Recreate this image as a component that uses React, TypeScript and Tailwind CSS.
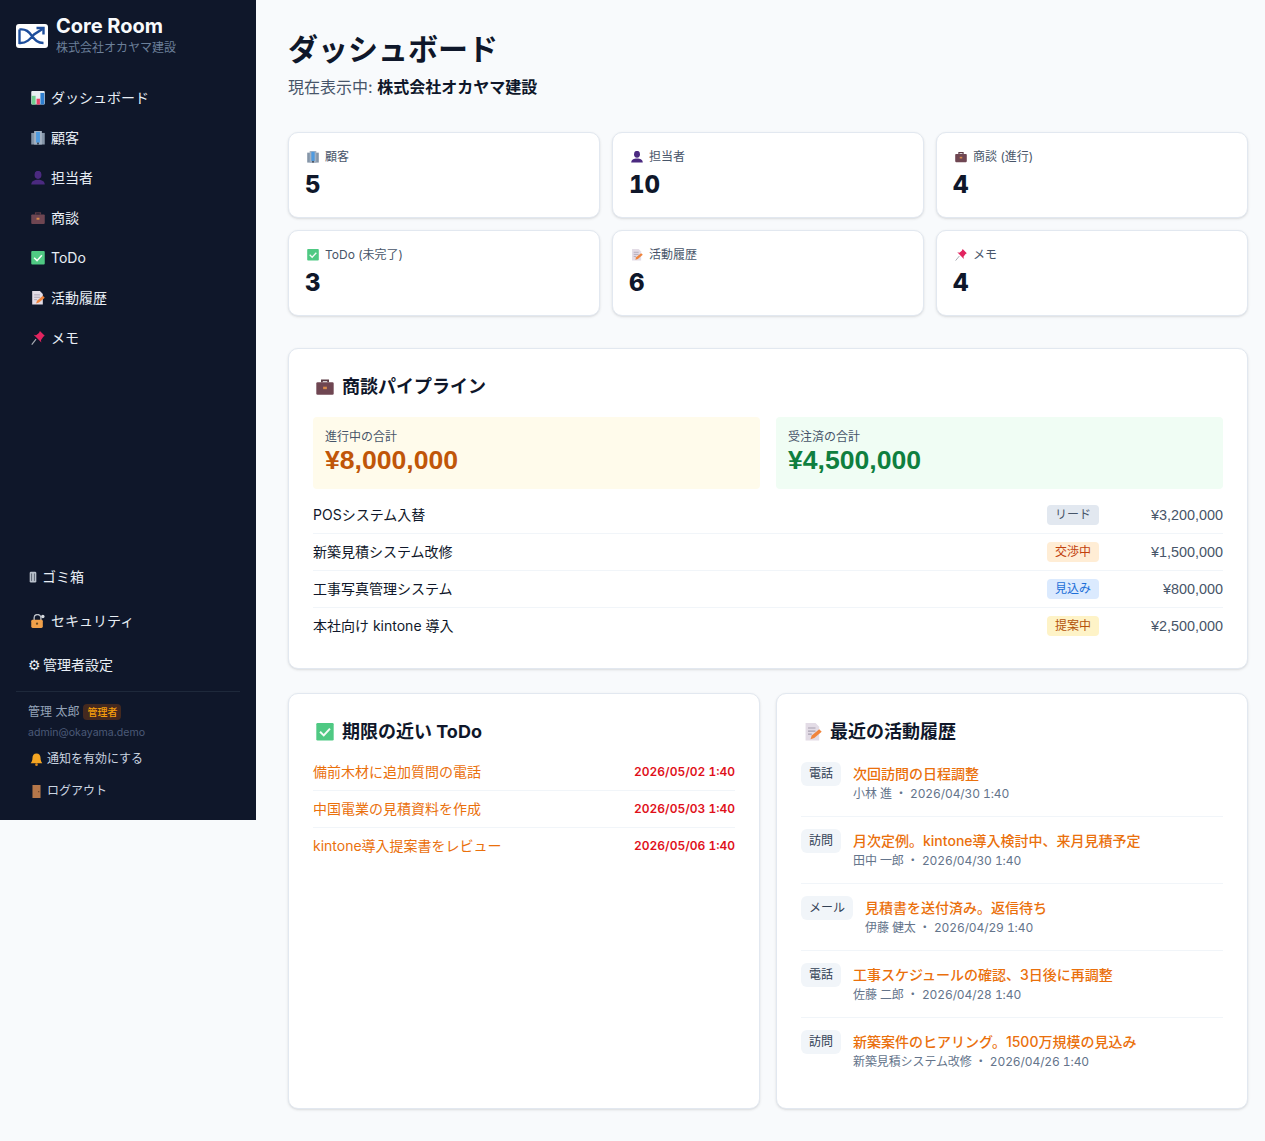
const font = "[font-family:Inter,'Noto_Sans_CJK_JP',sans-serif]";
const arial = "[font-family:'Liberation_Sans','Noto_Sans_CJK_JP',sans-serif]";

type IconName = "chart" | "building" | "person" | "case" | "check" | "memo" | "pin" | "trash" | "lock" | "bell" | "door";

const nav: { icon: IconName; label: string }[] = [
  { icon: "chart", label: "ダッシュボード" },
  { icon: "building", label: "顧客" },
  { icon: "person", label: "担当者" },
  { icon: "case", label: "商談" },
  { icon: "check", label: "ToDo" },
  { icon: "memo", label: "活動履歴" },
  { icon: "pin", label: "メモ" },
];

const stats: { icon: IconName; label: string; value: number }[] = [
  { icon: "building", label: "顧客", value: 5 },
  { icon: "person", label: "担当者", value: 10 },
  { icon: "case", label: "商談 (進行)", value: 4 },
  { icon: "check", label: "ToDo (未完了)", value: 3 },
  { icon: "memo", label: "活動履歴", value: 6 },
  { icon: "pin", label: "メモ", value: 4 },
];

const deals = [
  { name: "POSシステム入替", stage: "リード", cls: "bg-[#e2e8f0] text-[#475569]", amount: "¥3,200,000" },
  { name: "新築見積システム改修", stage: "交渉中", cls: "bg-[#ffedd5] text-[#c2410c]", amount: "¥1,500,000" },
  { name: "工事写真管理システム", stage: "見込み", cls: "bg-[#dbeafe] text-[#1d6fd8]", amount: "¥800,000" },
  { name: "本社向け kintone 導入", stage: "提案中", cls: "bg-[#fef3c7] text-[#b45309]", amount: "¥2,500,000" },
];

const todos = [
  { title: "備前木材に追加質問の電話", due: "2026/05/02 1:40" },
  { title: "中国電業の見積資料を作成", due: "2026/05/03 1:40" },
  { title: "kintone導入提案書をレビュー", due: "2026/05/06 1:40" },
];

const activities = [
  { type: "電話", title: "次回訪問の日程調整", who: "小林 進", at: "2026/04/30 1:40" },
  { type: "訪問", title: "月次定例。kintone導入検討中、来月見積予定", who: "田中 一郎", at: "2026/04/30 1:40" },
  { type: "メール", title: "見積書を送付済み。返信待ち", who: "伊藤 健太", at: "2026/04/29 1:40" },
  { type: "電話", title: "工事スケジュールの確認、3日後に再調整", who: "佐藤 二郎", at: "2026/04/28 1:40" },
  { type: "訪問", title: "新築案件のヒアリング。1500万規模の見込み", who: "新築見積システム改修", at: "2026/04/26 1:40" },
];

/* emoji-like pictures, the reference's emoji font is not installed */
function Icon({ name, size, className = "" }: { name: IconName; size: number; className?: string }) {
  return (
    <svg width={size} height={size} viewBox="1 1 14 14.500" className={`shrink-0 ${className}`}>
      {name === "chart" && (
        <>
          <rect x="1" y="1" width="14" height="14" rx="1" fill="#e8edf2" />
          <rect x="1.500" y="6" width="4" height="9" fill="#6fce8f" />
          <rect x="6.500" y="9" width="3.500" height="6" fill="#e8436a" />
          <rect x="10.500" y="3" width="4" height="12" fill="#2f7fd0" />
        </>
      )}
      {name === "building" && (
        <>
          <rect x="1" y="3" width="14" height="12" fill="#8595a8" />
          <rect x="4" y="1" width="8" height="14" fill="#a3b1c2" />
          <rect x="6" y="2" width="4" height="11" fill="#4f9be0" />
          <rect x="7" y="13" width="2" height="2" fill="#3a4656" />
        </>
      )}
      {name === "person" && (
        <>
          <ellipse cx="8" cy="5" rx="3.600" ry="4.200" fill="#4b2a80" />
          <path d="M1 15c0-3.500 3-5 7-5s7 1.500 7 5z" fill="#4b2a80" />
        </>
      )}
      {name === "case" && (
        <>
          <path d="M5.500 4.500V3h5v1.500" fill="none" stroke="#5a3a44" strokeWidth="1.400" />
          <rect x="1" y="4.500" width="14" height="10" rx="1" fill="#6f4652" />
          <rect x="6.500" y="8" width="3" height="2" fill="#d98a4a" />
        </>
      )}
      {name === "check" && (
        <>
          <rect x="1" y="1" width="14" height="14" rx="1" fill="#4fc983" />
          <path d="M4 8l3 3 5-5.500" fill="none" stroke="#f4fbf6" strokeWidth="1.600" />
        </>
      )}
      {name === "memo" && (
        <>
          <path d="M2 1h8l3 3v11H2z" fill="#e3dce6" />
          <path d="M4 5h6M4 7.500h6M4 10h3" stroke="#a79fb0" strokeWidth="0.900" />
          <path d="M6 14l1-3 6-5 2 2-6 5z" fill="#f0843c" />
        </>
      )}
      {name === "pin" && (
        <>
          <path d="M1.500 15L6 9.500" stroke="#a8adb5" strokeWidth="1.200" />
          <path d="M10 1l5 5-1.500 1L11 10.500l.5 2.500-8-8 2.500.5L9 3z" fill="#e2245f" />
        </>
      )}
      {name === "trash" && (
        <>
          <rect x="4" y="2" width="8" height="13" rx="1.500" fill="#b8c0ca" />
          <path d="M6.300 4v9M9.700 4v9" stroke="#4b5563" strokeWidth="1" />
        </>
      )}
      {name === "lock" && (
        <>
          <path d="M4 7.500V5a3.500 3.500 0 0 1 7 0v2.500" fill="none" stroke="#b9bec6" strokeWidth="1.400" />
          <rect x="1" y="7" width="12" height="8.500" rx="1.500" fill="#f0a04a" />
          <circle cx="7" cy="11" r="1.200" fill="#6b4a20" />
          <circle cx="13" cy="3.500" r="1.800" fill="#d7dbe0" />
        </>
      )}
      {name === "bell" && (
        <>
          <path d="M8 1.500c3 0 4.500 2.300 4.500 5 0 3 1 4.500 2 6h-13c1-1.500 2-3 2-6 0-2.700 1.500-5 4.500-5z" fill="#f5a623" />
          <circle cx="8" cy="14" r="1.500" fill="#d9861a" />
        </>
      )}
      {name === "door" && (
        <>
          <rect x="3.500" y="1" width="9" height="14.500" fill="#b5774a" />
          <circle cx="10.500" cy="8.500" r="0.700" fill="#5c3a20" />
        </>
      )}
    </svg>
  );
}

function Logo() {
  return (
    <svg width="32" height="24" viewBox="0 0 32 24" className="shrink-0 mt-0.5">
      <rect width="32" height="24" rx="3" fill="#fff" />
      <path
        d="M3.500 5.500C10 4.500 13 8 16 12c3 4 5.500 7 11.500 7M3.500 5.500v13.500C11 19.500 15 14 18 10.500L26.500 5"
        fill="none"
        stroke="#1e4e9c"
        strokeWidth="2.400"
      />
      <path d="M20.500 4h7v6.500" fill="none" stroke="#1e4e9c" strokeWidth="2.400" />
    </svg>
  );
}

function Sidebar() {
  return (
    <aside className="w-64 h-[820px] shrink-0 bg-[#0f172a] flex flex-col px-4 pt-3.5 pb-[13px]">
      <div className="flex items-center gap-2 pb-[22px]">
        <Logo />
        <div>
          <div className="text-xl leading-6 font-bold text-[#f8fafc]">Core Room</div>
          <div className="text-xs leading-4 mt-0.5 text-[#6b7f99]">株式会社オカヤマ建設</div>
        </div>
      </div>
      <nav className="flex flex-col">
        {nav.map((item) => (
          <a key={item.label} className="h-10 flex items-center px-3.5 text-sm text-[#e8eef5]">
            <Icon name={item.icon} size={14} className="ml-px mr-1.5" />
            {item.label}
          </a>
        ))}
      </nav>
      <div className="mt-auto flex flex-col">
        <a className="h-11 flex items-center px-3 text-sm text-[#e8eef5]">
          <Icon name="trash" size={12} className="-ml-px mr-[3px]" />
          ゴミ箱
        </a>
        <a className="h-11 flex items-center px-3.5 text-sm text-[#e8eef5]">
          <Icon name="lock" size={14} className="ml-px mr-1.5" />
          セキュリティ
        </a>
        <a className="h-11 flex items-center px-3 text-sm text-[#e8eef5]">
          <span className="w-[15px] [font-family:'DejaVu_Sans']">⚙&#xFE0E;</span>
          管理者設定
        </a>
        <div className="border-t border-[#1e293b] mt-1 pt-3 px-3">
          <div className="flex items-center gap-1 text-xs leading-4 text-[#94a3b8]">
            管理 太郎
            <span className="px-1 rounded bg-[#44291f] text-[10px] leading-4 font-medium text-[#f59e0b]">管理者</span>
          </div>
          <div className="mt-[5px] text-[10.600px] leading-4 text-[#4b5a78]">admin@okayama.demo</div>
        </div>
        <a className="h-8 mt-0.5 flex items-center px-3.5 text-xs text-[#cbd5e1]">
          <Icon name="bell" size={13} className="mr-1" />
          通知を有効にする
        </a>
        <a className="h-8 flex items-center px-3.5 text-xs text-[#cbd5e1]">
          <Icon name="door" size={13} className="mr-1" />
          ログアウト
        </a>
      </div>
    </aside>
  );
}

function Panel({ icon, title, children, className = "" }: { icon: IconName; title: string; children: React.ReactNode; className?: string }) {
  return (
    <section className={`bg-white border border-[#e2e8f0] rounded-[10px] shadow-sm p-6 ${className}`}>
      <h2 className="flex items-center text-lg leading-7 font-bold text-[#0f172a]">
        <Icon name={icon} size={18} className="ml-[3px] mr-2" />
        {title}
      </h2>
      {children}
    </section>
  );
}

export default function App() {
  return (
    <div className={`${font} flex items-start min-h-screen bg-[#f8fafc]`}>
      <Sidebar />
      <main className="w-[1009px] p-8">
        <div className="w-[960px]">
          <h1 className="text-3xl leading-[34px] font-bold text-[#0f172a]">ダッシュボード</h1>
          <p className="mt-[9px] text-base leading-6 text-[#475569]">
            現在表示中: <strong className="text-[#0f172a]">株式会社オカヤマ建設</strong>
          </p>

          <div className="mt-[33px] grid grid-cols-3 gap-3">
            {stats.map((s) => (
              <div key={s.label} className="h-[86px] bg-white border border-[#e2e8f0] rounded-[10px] shadow-sm p-4">
                <div className="flex items-center text-xs leading-4 text-[#475569]">
                  <Icon name={s.icon} size={12} className="ml-0.5 mr-1.5" />
                  {s.label}
                </div>
                <div className="mt-1 text-2xl leading-8 font-extrabold tabular-nums text-[#0f172a]">{s.value}</div>
              </div>
            ))}
          </div>

          <Panel icon="case" title="商談パイプライン" className="mt-8">
            <div className="grid grid-cols-2 gap-4 mt-4">
              <div className="h-[72px] rounded bg-[#fffbeb] p-3">
                <div className="text-xs leading-4 text-[#475569]">進行中の合計</div>
                <div className={`${arial} -mt-px text-[26.600px] leading-8 font-bold text-[#c05608]`}>¥8,000,000</div>
              </div>
              <div className="h-[72px] rounded bg-[#f0fdf4] p-3">
                <div className="text-xs leading-4 text-[#475569]">受注済の合計</div>
                <div className={`${arial} -mt-px text-[26.600px] leading-8 font-bold text-[#0f7f3f]`}>¥4,500,000</div>
              </div>
            </div>
            <div className="mt-2">
              {deals.map((d) => (
                <div key={d.name} className="flex items-center gap-6 py-2 border-b border-[#f1f5f9] last:border-b-0">
                  <div className="flex-1 text-sm leading-5 text-[#0f172a]">{d.name}</div>
                  <span className={`px-2 rounded text-xs leading-5 ${d.cls}`}>{d.stage}</span>
                  <div className={`${arial} w-[100px] text-right text-[14.400px] leading-5 text-[#475569]`}>{d.amount}</div>
                </div>
              ))}
            </div>
          </Panel>

          <div className="mt-6 grid grid-cols-2 gap-4">
            <Panel icon="check" title="期限の近い ToDo">
              <div className="mt-2">
                {todos.map((t) => (
                  <div key={t.title} className="flex items-center justify-between py-2 border-b border-[#f1f5f9] last:border-b-0">
                    <a className="text-sm leading-5 text-[#ea700c]">{t.title}</a>
                    <span className="text-xs leading-5 font-semibold tabular-nums text-[#e0101a]">{t.due}</span>
                  </div>
                ))}
              </div>
            </Panel>
            <Panel icon="memo" title="最近の活動履歴">
              <div className="mt-1">
                {activities.map((a) => (
                  <div key={a.title} className="flex items-start gap-3 py-3 border-b border-[#f1f5f9] last:border-b-0">
                    <span className="px-2 rounded-md bg-[#f1f5f9] text-xs leading-6 text-[#334155]">{a.type}</span>
                    <div className="mt-0.5">
                      <div className="text-sm leading-5 font-medium text-[#ea700c]">{a.title}</div>
                      <div className="text-xs leading-5 tabular-nums tracking-[-0.1px] text-[#64748b]">
                        {a.who} ・ {a.at}
                      </div>
                    </div>
                  </div>
                ))}
              </div>
            </Panel>
          </div>
        </div>
      </main>
    </div>
  );
}
